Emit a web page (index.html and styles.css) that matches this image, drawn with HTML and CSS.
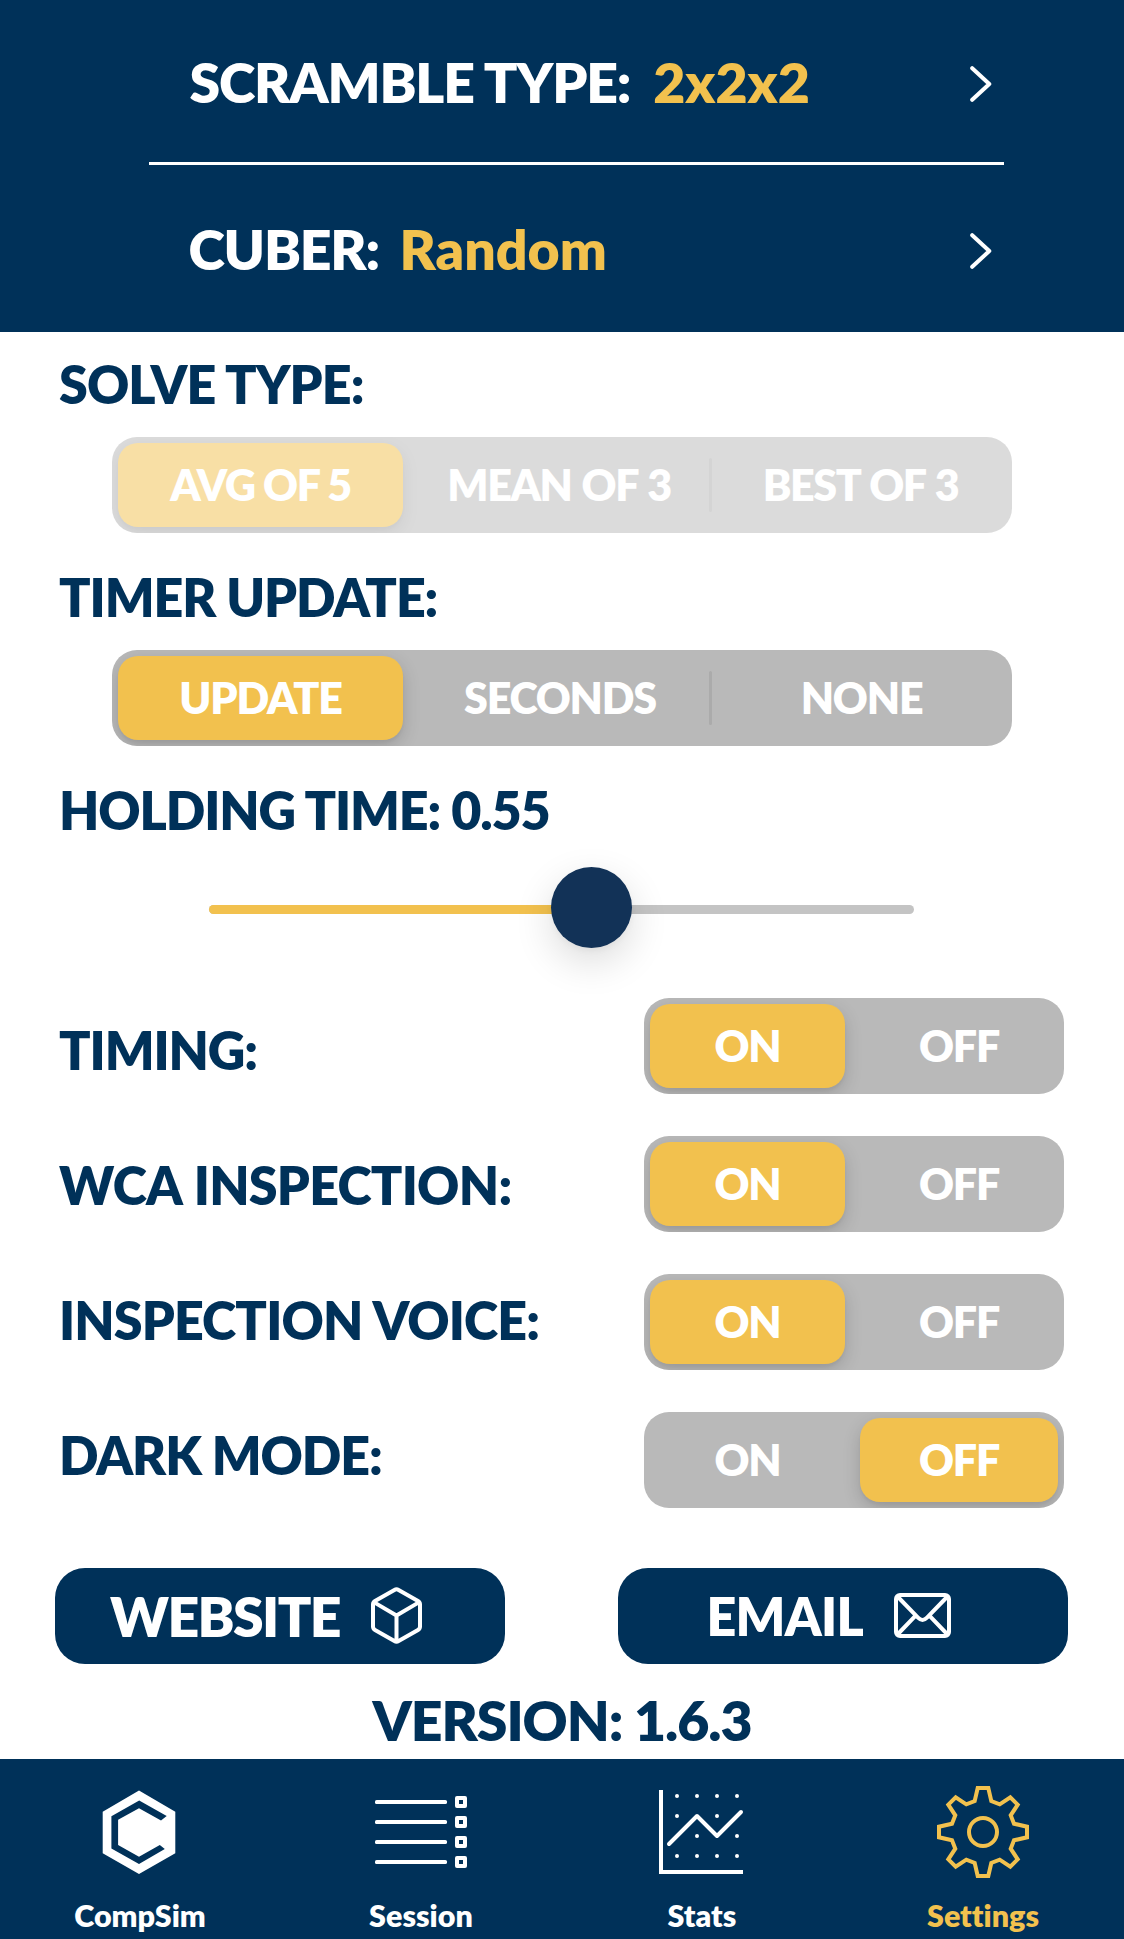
FILE: index.html
```html
<!DOCTYPE html>
<html lang="en">
<head>
<meta charset="utf-8">
<title>CompSim Settings</title>
<link rel="stylesheet" href="styles.css">
</head>
<body>
<header class="header">
  <div class="option option-scramble">
    <span class="option-label">SCRAMBLE TYPE:</span><span class="option-value">2x2x2</span>
    <svg class="chevron" width="22" height="36" viewBox="0 0 22 36"><path d="M2.2 2.2 19.3 18 2.2 33.8"/></svg>
  </div>
  <div class="rule"></div>
  <div class="option option-cuber">
    <span class="option-label">CUBER:</span><span class="option-value">Random</span>
    <svg class="chevron" width="22" height="36" viewBox="0 0 22 36"><path d="M2.2 2.2 19.3 18 2.2 33.8"/></svg>
  </div>
</header>

<main class="main">
  <h2 class="heading solve">SOLVE TYPE:</h2>
  <div class="segmented three disabled">
    <span class="seg selected">AVG OF 5</span><i class="divider hidden"></i>
    <span class="seg">MEAN OF 3</span><i class="divider"></i>
    <span class="seg">BEST OF 3</span>
  </div>

  <h2 class="heading">TIMER UPDATE:</h2>
  <div class="segmented three">
    <span class="seg selected">UPDATE</span><i class="divider hidden"></i>
    <span class="seg">SECONDS</span><i class="divider"></i>
    <span class="seg">NONE</span>
  </div>

  <h2 class="heading">HOLDING TIME: 0.55</h2>
  <div class="slider">
    <div class="fill" style="width: 54.3%"></div>
    <div class="thumb" style="left: 54.3%"></div>
  </div>

  <div class="toggles">
    <div class="labels">
      <h2 class="heading">TIMING:</h2>
      <h2 class="heading wca">WCA INSPECTION:</h2>
      <h2 class="heading voice">INSPECTION VOICE:</h2>
      <h2 class="heading">DARK MODE:</h2>
    </div>
    <div class="switches">
      <div class="segmented two"><span class="seg selected">ON</span><i class="divider hidden"></i><span class="seg">OFF</span></div>
      <div class="segmented two"><span class="seg selected">ON</span><i class="divider hidden"></i><span class="seg">OFF</span></div>
      <div class="segmented two"><span class="seg selected">ON</span><i class="divider hidden"></i><span class="seg">OFF</span></div>
      <div class="segmented two"><span class="seg">ON</span><i class="divider hidden"></i><span class="seg selected">OFF</span></div>
    </div>
  </div>

  <div class="buttons">
    <a class="button website"><span class="button-text">WEBSITE</span>
      <svg class="button-icon" width="51" height="57" viewBox="0 0 51 57"><path d="M23.4 2.9Q25.5 1.7 27.6 2.9L47 13.9Q49 15.1 49 17.4V39.5Q49 41.8 47 43L27.6 54.1Q25.5 55.3 23.4 54.1L4 43Q2 41.8 2 39.5V17.4Q2 15.1 4 13.9ZM3.2 15.4 25.5 28.5 47.8 15.4M25.5 28.5V54.5"/></svg>
    </a>
    <a class="button email"><span class="button-text">EMAIL</span>
      <svg class="button-icon" width="57" height="45" viewBox="0 0 57 45"><rect x="2" y="2" width="53" height="41" rx="4"/><path d="M3.5 3.5 24 24.6Q28.5 29.2 33 24.6L53.5 3.5M21.6 22.6 3.5 41.5M35.4 22.6 53.5 41.5"/></svg>
    </a>
  </div>
  <p class="version">VERSION: 1.6.3</p>
</main>

<nav class="tabs">
  <a class="tab">
    <svg width="93" height="93" viewBox="0 0 93 93"><path fill="currentColor" fill-rule="evenodd" d="M45 4.6 81.3 25.7V67.2L45 88.1 8.7 67.2V25.7ZM72.7 30 45.2 14.6 17.4 30.3V62.6L45 78 70.8 62.9 65.8 59 45 70.8 24.1 59V33.8L45 22.2 67 34.4Z"/></svg>
    <span class="tab-label">CompSim</span>
  </a>
  <a class="tab">
    <svg width="93" height="93" viewBox="0 0 93 93"><g fill="currentColor"><rect y="14" width="72" height="4" rx="1.6"/><rect y="34" width="72" height="4" rx="1.6"/><rect y="54" width="72" height="4" rx="1.6"/><rect y="74" width="72" height="4" rx="1.6"/></g><g fill="none" stroke="currentColor" stroke-width="4" stroke-linejoin="round"><path d="M82 12h8v8h-8zM82 32h8v8h-8zM82 52h8v8h-8zM82 72h8v8h-8z"/></g></svg>
    <span class="tab-label">Session</span>
  </a>
  <a class="tab">
    <svg width="93" height="93" viewBox="0 0 93 93"><path fill="none" stroke="currentColor" stroke-width="4" d="M5 4V86H87"/><path fill="none" stroke="currentColor" stroke-width="4" stroke-linecap="round" stroke-linejoin="round" d="M13 58 41 30 61 50 85 26"/><path fill="none" stroke="currentColor" stroke-width="4" stroke-linecap="round" d="M21 10h0M41 10h0M61 10h0M81 10h0M21 30h0M61 30h0M41 50h0M81 50h0M21 70h0M41 70h0M61 70h0M81 70h0"/></svg>
    <span class="tab-label">Stats</span>
  </a>
  <a class="tab active">
    <svg width="93" height="93" viewBox="0 0 93 93"><g fill="none" stroke="currentColor" stroke-width="4"><circle cx="46" cy="46" r="14"/><path d="M40.7 2H51.3L54.3 15 62.7 18.3 73.3 11.3 80.7 18.7 73.7 29.3 77 37.7 90 40.7V51.3L77 54.3 73.7 62.7 80.7 73.3 73.3 80.7 62.7 73.7 54.3 77 51.3 90H40.7L37.7 77 29.3 73.7 18.7 80.7 11.3 73.3 18.3 62.7 15 54.3 2 51.3V40.7L15 37.7 18.3 29.3 11.3 18.7 18.7 11.3 29.3 18.3 37.7 15Z"/></g></svg>
    <span class="tab-label">Settings</span>
  </a>
</nav>
</body>
</html>
```
FILE: styles.css
```css
* { box-sizing: border-box; }

body {
  margin: 0;
  width: 1124px;
  height: 1939px;
  display: flex;
  flex-direction: column;
  background: #fff;
  color: #003159;
  font-family: Lato, "Open Sans", sans-serif;
  font-weight: 800;
  font-variant-ligatures: none;
}

svg { display: block; flex: none; }

/* Header */
.header { height: 332px; background: #003159; color: #fff; }
.option {
  display: flex;
  align-items: center;
  padding: 2px 132px 0 189.5px;
  font-size: 55.4px;
  line-height: 66px;
}
.option-scramble { height: 162px; }
.option-cuber { height: 167px; padding: 1px 132px 0 188.5px; }
.option-label { letter-spacing: -1.2px; }
.option-value { margin-left: 23px; color: #f2c14e; }
.option-cuber .option-value { margin-left: 20.5px; }
.rule { height: 3px; width: 855px; margin-left: 149px; background: #fff; }
.chevron {
  margin: 4px 0 0 auto;
  fill: none;
  stroke: #fff;
  stroke-width: 4;
  stroke-linecap: round;
  stroke-linejoin: round;
}

/* Settings body */
.main { flex: 1; padding-top: 22px; }
.heading {
  margin: 0 0 0 59px;
  font-size: 52px;
  line-height: 60px;
  font-weight: 800;
  letter-spacing: -1.1px;
}
.solve { letter-spacing: -.9px; }
.wca { letter-spacing: -.75px; word-spacing: 2px; }
.voice { letter-spacing: -.87px; word-spacing: 1px; }

.segmented {
  display: grid;
  height: 96px;
  padding: 6px 0;
  border-radius: 25px;
  background: #b9b9b9;
  overflow: hidden;
}
.three { grid-template-columns: 297px 3px 297px 3px 300px; width: 900px; margin: 23px 0 34px 112px; }
.two { grid-template-columns: 207px 3px 210px; width: 420px; }
.seg {
  display: flex;
  align-items: center;
  justify-content: center;
  margin: 0 6px;
  padding-bottom: 1px;
  border-radius: 20px;
  color: #fff;
  font-size: 43px;
  letter-spacing: -1.2px;
}
.three .seg:not(.selected) { padding-right: 1px; }
.disabled { opacity: .5; }
.disabled .seg { letter-spacing: -1.4px; }
.disabled .seg:not(.selected) { padding-right: 3px; word-spacing: 1.5px; }
.selected {
  background: #f2c14e;
  box-shadow: 0 6px 18px rgba(0, 0, 0, .16), 0 3px 3px rgba(0, 0, 0, .04);
}
.divider { height: 54px; align-self: center; border-radius: 1.5px; background: #ababab; }
.hidden { visibility: hidden; }

.slider {
  position: relative;
  width: 705px;
  height: 9px;
  margin: 65px 0 84px 209px;
  border-radius: 5px;
  background: #c4c4c4;
}
.fill { height: 9px; border-radius: 5px; background: #f2c14e; }
.thumb {
  position: absolute;
  top: -38px;
  width: 81px;
  height: 81px;
  margin-left: -41px;
  border-radius: 50%;
  background: #123257;
  box-shadow: 0 14px 39px rgba(0, 0, 0, .14), 0 3px 6px rgba(0, 0, 0, .04);
}

.toggles { display: flex; justify-content: space-between; padding-right: 60px; }
.labels { display: flex; flex-direction: column; gap: 75px; padding-top: 22px; }
.switches { display: flex; flex-direction: column; gap: 42px; }

.buttons { display: flex; justify-content: space-between; margin: 60px 56px 0 55px; }
.button {
  display: flex;
  align-items: center;
  width: 450px;
  height: 96px;
  border-radius: 30px;
  background: #003159;
  color: #fff;
  line-height: 66px;
}
.website { padding-left: 55px; font-size: 55.4px; letter-spacing: -1.6px; }
.email { padding-left: 88.4px; font-size: 52px; letter-spacing: -.7px; }
.button-icon {
  margin-left: 31px;
  margin-bottom: 1px;
  fill: none;
  stroke: #fff;
  stroke-width: 4;
  stroke-linejoin: round;
}

.version {
  margin: 23px 0 0;
  font-size: 55.4px;
  line-height: 66px;
  letter-spacing: -1.06px;
  text-align: center;
}

/* Tab bar */
.tabs {
  display: grid;
  grid-template-columns: repeat(4, 281px);
  height: 180px;
  padding-top: 27px;
  background: #003159;
  color: #fff;
}
.tab { display: flex; flex-direction: column; align-items: center; gap: 18px; }
.tab-label { margin-right: 1px; font-size: 30.5px; line-height: 36px; }
.active { color: #f2c14e; }
```
